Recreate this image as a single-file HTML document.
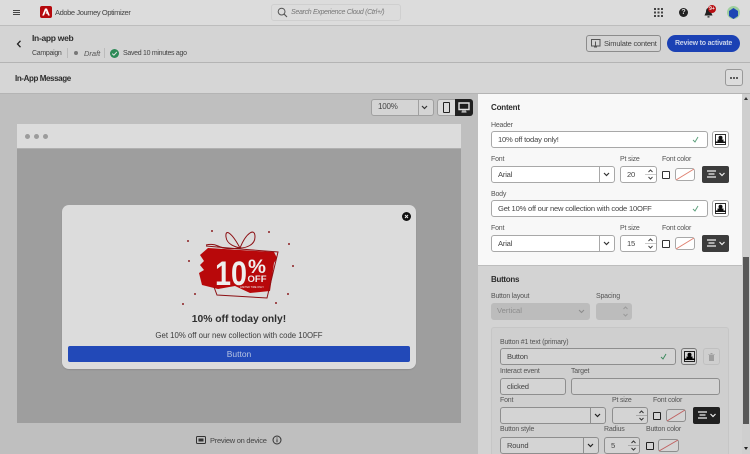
<!DOCTYPE html>
<html style="width:750px;height:454px;overflow:hidden"><head><meta charset="utf-8">
<style>
html,body{margin:0;padding:0}
body{width:750px;height:454px;overflow:hidden;position:relative;background:#bfbfbf;font-family:"Liberation Sans",sans-serif;color:#2c2c2c}
#w{position:absolute;left:0;top:0;width:750px;height:454px;overflow:hidden}
.a{position:absolute}
.t{position:absolute;white-space:nowrap;line-height:12px}
.lb{position:absolute;white-space:nowrap;font-size:7px;line-height:10px;color:#555;letter-spacing:-.2px}
.f{position:absolute;box-sizing:border-box;border:1px solid #a8a8a8;border-radius:3px;background:#fff;font-size:7.6px;letter-spacing:-.2px;line-height:15px;padding-left:6px;color:#444;white-space:nowrap}
.g .f{background:#d4d4d4;border-color:#8e8e8e}
.dv{position:absolute;top:0;bottom:0;width:1px;background:#a8a8a8}
.c{position:absolute;width:8px;height:8px;box-sizing:border-box;border:1px solid #333;background:#fff;border-radius:1px}
svg{position:absolute;display:block}
</style></head><body><div id="w">

<!-- top bar -->
<div class="a" style="left:0;top:0;width:750px;height:26px;box-sizing:border-box;background:#dcdcdc;border-bottom:1px solid #bdbdbd"></div>
<div class="a" style="left:13px;top:10px;width:7px;height:1px;background:#444;box-shadow:0 2px 0 #444,0 4px 0 #444"></div>
<div class="a" style="left:40px;top:6px;width:12px;height:12px;background:#b5080c;border-radius:2px"></div>
<svg style="left:42px;top:8px" width="8" height="8" viewBox="0 0 8 8"><path d="M3 .5H5L7.800 7.500H6L5.300 5.600H3.600L4.500 4 4 2.600 2 7.500H.2Z" fill="#fff"/></svg>
<div class="t" style="left:55px;top:6.500px;font-size:7.500px;letter-spacing:-.4px;color:#444">Adobe Journey Optimizer</div>
<div class="a" style="left:271px;top:4px;width:130px;height:17px;box-sizing:border-box;border:1px solid #cfcfcf;border-radius:3px"></div>
<svg style="left:277px;top:7px" width="11" height="11" viewBox="0 0 11 11"><circle cx="4.600" cy="4.600" r="3.400" fill="none" stroke="#555" stroke-width="1"/><path d="M7.200 7.200L10 10" stroke="#555" stroke-width="1.100"/></svg>
<div class="t" style="left:291px;top:7px;font-size:7px;letter-spacing:-.3px;font-style:italic;color:#777">Search Experience Cloud (Ctrl+/)</div>
<svg style="left:654px;top:8px" width="10" height="10" viewBox="0 0 10 10" fill="#444"><rect x="0" y="0" width="2" height="2"/><rect x="3.500" y="0" width="2" height="2"/><rect x="7" y="0" width="2" height="2"/><rect x="0" y="3.500" width="2" height="2"/><rect x="3.500" y="3.500" width="2" height="2"/><rect x="7" y="3.500" width="2" height="2"/><rect x="0" y="7" width="2" height="2"/><rect x="3.500" y="7" width="2" height="2"/><rect x="7" y="7" width="2" height="2"/></svg>
<div class="a" style="left:679px;top:8px;width:9px;height:9px;border-radius:50%;background:#222;color:#ddd;font-size:7px;font-weight:bold;line-height:9px;text-align:center">?</div>
<svg style="left:704px;top:8px" width="9" height="10" viewBox="0 0 9 10"><path d="M4.500 0C2.500 0 2 2 2 4L.5 7.500H8.500L7 4C7 2 6.500 0 4.500 0ZM3.500 8.200H5.500V9.500H3.500Z" fill="#222"/></svg>
<div class="a" style="left:708px;top:5px;width:8px;height:8px;border-radius:4px;background:#b80e12;color:#eee;font-size:5px;font-weight:bold;line-height:8px;text-align:center">9+</div>
<div class="a" style="left:727px;top:6px;width:13px;height:13px;border-radius:50%;background:#9fcf9f"></div>
<svg style="left:729px;top:8px" width="9" height="11" viewBox="0 0 9 11"><path d="M4.500 0L9 3V8L4.500 11 0 8V3Z" fill="#1e48b4"/></svg>

<!-- campaign header -->
<div class="a" style="left:0;top:26px;width:750px;height:37px;box-sizing:border-box;background:#d4d4d4;border-bottom:1px solid #b4b4b4"></div>
<svg style="left:16px;top:40px" width="6" height="8" viewBox="0 0 6 8"><path d="M4.500 .8L1.500 4 4.500 7.200" fill="none" stroke="#222" stroke-width="1.300"/></svg>
<div class="t" style="left:32px;top:32px;font-size:8.500px;letter-spacing:-.3px;font-weight:bold;color:#2c2c2c">In-app web</div>
<div class="t" style="left:32px;top:47.500px;font-size:7px;letter-spacing:-.3px;color:#444">Campaign</div>
<div class="a" style="left:67px;top:48px;width:1px;height:10px;background:#bbb"></div>
<div class="a" style="left:74px;top:51px;width:4px;height:4px;border-radius:50%;background:#777"></div>
<div class="t" style="left:84px;top:47.500px;font-size:7.500px;font-style:italic;color:#555">Draft</div>
<div class="a" style="left:104px;top:48px;width:1px;height:10px;background:#bbb"></div>
<div class="a" style="left:110px;top:49px;width:9px;height:9px;border-radius:50%;background:#2d8a57"></div>
<svg style="left:110px;top:49px" width="9" height="9" viewBox="0 0 9 9"><path d="M2.200 4.600L3.900 6.200 6.800 2.900" fill="none" stroke="#e6e6e6" stroke-width="1"/></svg>
<div class="t" style="left:123px;top:47.500px;font-size:7px;letter-spacing:-.3px;color:#444">Saved 10 minutes ago</div>
<div class="a" style="left:586px;top:35px;width:75px;height:17px;box-sizing:border-box;border:1px solid #8c8c8c;border-radius:3px"></div>
<svg style="left:591px;top:39px" width="10" height="9" viewBox="0 0 10 9"><rect x=".5" y=".5" width="8.500" height="6.500" fill="none" stroke="#555"/><path d="M4.500 2.500V7M3 8H6" stroke="#555"/></svg>
<div class="t" style="left:604px;top:38px;font-size:7.500px;letter-spacing:-.2px;color:#444">Simulate content</div>
<div class="a" style="left:667px;top:35px;width:73px;height:17px;border-radius:9px;background:#1b41b4;color:#c8d2ea;font-size:7px;letter-spacing:-.2px;font-weight:bold;line-height:17px;text-align:center">Review to activate</div>

<!-- sub header -->
<div class="a" style="left:0;top:63px;width:750px;height:31px;box-sizing:border-box;background:#d6d6d6;border-bottom:1px solid #b4b4b4"></div>
<div class="t" style="left:15px;top:72.500px;font-size:8px;letter-spacing:-.4px;font-weight:bold;color:#2c2c2c">In-App Message</div>
<div class="a" style="left:725px;top:69px;width:18px;height:17px;box-sizing:border-box;border:1px solid #999;border-radius:3px;background:#dcdcdc"></div>
<div class="a" style="left:730px;top:77px;width:2px;height:2px;border-radius:50%;background:#333;box-shadow:3px 0 0 #333,6px 0 0 #333"></div>

<!-- preview toolbar -->
<div class="f" style="left:371px;top:99px;width:63px;height:17px;background:#d4d4d4;border-color:#a0a0a0;font-size:8px;line-height:14px">100%<span class="dv" style="left:46px;background:#a0a0a0"></span></div>
<svg style="left:421px;top:105px" width="7" height="5" viewBox="0 0 7 5"><path d="M1 1L3.500 3.500 6 1" fill="none" stroke="#333" stroke-width="1.200"/></svg>
<div class="a" style="left:437px;top:99px;width:19px;height:17px;box-sizing:border-box;border:1px solid #a0a0a0;border-radius:3px 0 0 3px;background:#dadada"></div>
<div class="a" style="left:443px;top:102px;width:7px;height:11px;box-sizing:border-box;border:1px solid #222;border-radius:1px"></div>
<div class="a" style="left:455px;top:99px;width:18px;height:17px;background:#202020;border-radius:0 3px 3px 0"></div>
<svg style="left:458px;top:102px" width="12" height="11" viewBox="0 0 12 11"><path d="M1 1H11V7.500H1Z" fill="none" stroke="#e4e4e4" stroke-width="1.400"/><path d="M5 8V9.500M3.500 10H8.500M7 8V9.500" stroke="#e4e4e4"/></svg>

<!-- preview frame -->
<div class="a" style="left:17px;top:124px;width:444px;height:25px;background:#dcdcdc;border-bottom:1px solid #b0b0b0;box-sizing:border-box"></div>
<div class="a" style="left:25px;top:134px;width:5px;height:5px;border-radius:50%;background:#9c9c9c;box-shadow:9px 0 0 #9c9c9c,18px 0 0 #9c9c9c"></div>
<div class="a" style="left:17px;top:149px;width:444px;height:274px;background:#9e9e9e"></div>

<!-- modal -->
<div class="a" style="left:62px;top:205px;width:354px;height:164px;background:#dcdcdc;border-radius:7px;box-shadow:0 1px 1px #8e8e8e"></div>
<div class="a" style="left:402px;top:212px;width:9px;height:9px;border-radius:50%;background:#111"></div>
<svg style="left:402px;top:212px" width="9" height="9" viewBox="0 0 9 9"><path d="M3 3L6 6M6 3L3 6" stroke="#eee" stroke-width="1"/></svg>

<svg style="left:180px;top:225px" width="120" height="85" viewBox="0 0 120 85">
<path d="M28 23L60 25 94 27 97 33 94 38 90 66 70 68 55 61 38 64 22 60 19 48 24 45 20 40 24 36 20 30Z" fill="#b8080a"/>
<path d="M26 21L60 24 98 27 87 73 37 70 34 62" fill="none" stroke="#8c1014" stroke-width="1"/>
<path d="M60 23C52 8 45 3 46 12 47 20 56 22 60 23 66 8 75 2 75 12 75 20 66 23 60 23M60 23C50 24 44 24 38 21 34 19 30 19 26 20" fill="none" stroke="#8c1014" stroke-width="1"/>
<text x="35" y="60" font-family="Liberation Sans,sans-serif" font-size="34" font-weight="bold" fill="#eee" textLength="32" lengthAdjust="spacingAndGlyphs">10</text>
<text x="77" y="48" font-family="Liberation Sans,sans-serif" font-size="19" font-weight="bold" fill="#eee" text-anchor="middle" textLength="18" lengthAdjust="spacingAndGlyphs">%</text>
<text x="77" y="57" font-family="Liberation Sans,sans-serif" font-size="9.500" font-weight="bold" fill="#eee" text-anchor="middle">OFF</text>
<text x="72" y="63" font-family="Liberation Sans,sans-serif" font-size="2.500" fill="#eee" text-anchor="middle">LIMITED TIME ONLY</text>
<g fill="#8c2024"><circle cx="32" cy="6" r="1"/><circle cx="8" cy="16" r="1"/><circle cx="89" cy="7" r="1"/><circle cx="109" cy="19" r="1"/><circle cx="9" cy="36" r="1"/><circle cx="113" cy="41" r="1"/><circle cx="15" cy="69" r="1"/><circle cx="108" cy="69" r="1"/><circle cx="3" cy="79" r="1"/><circle cx="96" cy="78" r="1"/></g>
</svg>

<div class="a" style="left:62px;top:313px;width:354px;text-align:center;font-size:10.300px;font-weight:bold;line-height:14px;color:#2e2e2e">10% off today only!</div>
<div class="a" style="left:62px;top:330px;width:354px;text-align:center;font-size:7.800px;line-height:12px;color:#3c3c3c">Get 10% off our new collection with code 10OFF</div>
<div class="a" style="left:68px;top:346px;width:342px;height:16px;background:#2249b8;border-radius:2px;text-align:center;font-size:8.500px;line-height:16px;color:#b6c3e2">Button</div>

<!-- preview on device -->
<svg style="left:196px;top:436px" width="10" height="8" viewBox="0 0 10 8"><rect x=".5" y=".5" width="9" height="7" rx="1" fill="none" stroke="#333"/><rect x="2.500" y="2.500" width="5" height="3" fill="#333"/></svg>
<div class="t" style="left:210px;top:434.500px;font-size:7.500px;letter-spacing:-.25px;color:#444">Preview on device</div>
<svg style="left:272px;top:435px" width="10" height="10" viewBox="0 0 10 10"><circle cx="5" cy="5" r="4" fill="none" stroke="#333"/><path d="M5 4.300V7.300M5 2.500V3.500" stroke="#333"/></svg>

<!-- content panel -->
<div class="a" style="left:478px;top:94px;width:264px;height:171px;background:#f8f8f8"></div>
<div class="a" style="left:478px;top:265px;width:264px;height:189px;background:#d3d3d3;border-top:1px solid #bdbdbd;box-sizing:border-box"></div>
<div class="a" style="left:742px;top:94px;width:8px;height:360px;background:#cfcfcf"></div>
<div class="a" style="left:743px;top:257px;width:6px;height:167px;background:#585858"></div>
<svg style="left:744px;top:97px" width="4" height="3" viewBox="0 0 4 3"><path d="M2 0L4 3H0Z" fill="#333"/></svg>
<svg style="left:744px;top:447px" width="4" height="3" viewBox="0 0 4 3"><path d="M0 0H4L2 3Z" fill="#222"/></svg>

<div class="t" style="left:491px;top:101.500px;font-size:8px;letter-spacing:-.2px;font-weight:bold">Content</div>

<!-- Header -->
<div class="lb" style="left:491px;top:120.500px">Header</div>
<div class="f" style="left:491px;top:131px;width:217px;height:17px">10% off today only!</div>
<svg style="left:692px;top:136px" width="7" height="7" viewBox="0 0 7 7"><path d="M1 4L3 6 6 1" fill="none" stroke="#5da07c" stroke-width="1"/></svg>
<div class="f" style="left:712px;top:131px;width:17px;height:17px"></div>
<svg style="left:715px;top:134px" width="11" height="11" viewBox="0 0 11 11"><rect x=".5" y=".5" width="10" height="10" fill="none" stroke="#333"/><circle cx="5.500" cy="3.800" r="2" fill="#111"/><rect x="2.500" y="5.500" width="6" height="2" fill="#111"/><rect y="7.500" width="11" height="1.500" fill="#111"/></svg>

<div class="lb" style="left:491px;top:155px">Font</div>
<div class="lb" style="left:620px;top:155px">Pt size</div>
<div class="lb" style="left:662px;top:155px">Font color</div>
<div class="f" style="left:491px;top:166px;width:124px;height:17px">Arial<span class="dv" style="left:107px"></span></div>
<svg style="left:603px;top:172px" width="7" height="5" viewBox="0 0 7 5"><path d="M1 1L3.500 3.500 6 1" fill="none" stroke="#333" stroke-width="1.200"/></svg>
<div class="f" style="left:620px;top:166px;width:37px;height:17px">20</div>
<svg style="left:645px;top:168px" width="11" height="13" viewBox="0 0 11 13"><path d="M3.500 4L5.500 2 7.500 4M3.500 9L5.500 11 7.500 9" fill="none" stroke="#444"/><path d="M0 6.500H11" stroke="#ccc"/></svg>
<div class="c" style="left:662px;top:171px"></div>
<div class="f" style="left:675px;top:168px;width:20px;height:13px"></div>
<svg style="left:675px;top:168px" width="20" height="13" viewBox="0 0 20 13"><path d="M1 12L19 1" stroke="#e08070"/></svg>
<div class="a" style="left:702px;top:166px;width:27px;height:17px;background:#3c3c3c;border-radius:2px"></div>
<svg style="left:706px;top:170px" width="20" height="9" viewBox="0 0 20 9"><path d="M1 1H10M2.500 4H8.500M1 7H10" stroke="#eee" stroke-width="1.200"/><path d="M13.500 3L16 5.500 18.500 3" fill="none" stroke="#eee" stroke-width="1.200"/></svg>

<!-- Body -->
<div class="lb" style="left:491px;top:190px">Body</div>
<div class="f" style="left:491px;top:200px;width:217px;height:17px">Get 10% off our new collection with code 10OFF</div>
<svg style="left:692px;top:205px" width="7" height="7" viewBox="0 0 7 7"><path d="M1 4L3 6 6 1" fill="none" stroke="#5da07c" stroke-width="1"/></svg>
<div class="f" style="left:712px;top:200px;width:17px;height:17px"></div>
<svg style="left:715px;top:203px" width="11" height="11" viewBox="0 0 11 11"><rect x=".5" y=".5" width="10" height="10" fill="none" stroke="#333"/><circle cx="5.500" cy="3.800" r="2" fill="#111"/><rect x="2.500" y="5.500" width="6" height="2" fill="#111"/><rect y="7.500" width="11" height="1.500" fill="#111"/></svg>

<div class="lb" style="left:491px;top:224px">Font</div>
<div class="lb" style="left:620px;top:224px">Pt size</div>
<div class="lb" style="left:662px;top:224px">Font color</div>
<div class="f" style="left:491px;top:235px;width:124px;height:17px">Arial<span class="dv" style="left:107px"></span></div>
<svg style="left:603px;top:241px" width="7" height="5" viewBox="0 0 7 5"><path d="M1 1L3.500 3.500 6 1" fill="none" stroke="#333" stroke-width="1.200"/></svg>
<div class="f" style="left:620px;top:235px;width:37px;height:17px">15</div>
<svg style="left:645px;top:237px" width="11" height="13" viewBox="0 0 11 13"><path d="M3.500 4L5.500 2 7.500 4M3.500 9L5.500 11 7.500 9" fill="none" stroke="#444"/><path d="M0 6.500H11" stroke="#ccc"/></svg>
<div class="c" style="left:662px;top:240px"></div>
<div class="f" style="left:675px;top:237px;width:20px;height:13px"></div>
<svg style="left:675px;top:237px" width="20" height="13" viewBox="0 0 20 13"><path d="M1 12L19 1" stroke="#e08070"/></svg>
<div class="a" style="left:702px;top:235px;width:27px;height:17px;background:#3c3c3c;border-radius:2px"></div>
<svg style="left:706px;top:239px" width="20" height="9" viewBox="0 0 20 9"><path d="M1 1H10M2.500 4H8.500M1 7H10" stroke="#eee" stroke-width="1.200"/><path d="M13.500 3L16 5.500 18.500 3" fill="none" stroke="#eee" stroke-width="1.200"/></svg>

<!-- Buttons -->
<div class="t" style="left:491px;top:273.500px;font-size:8px;letter-spacing:-.3px;font-weight:bold">Buttons</div>
<div class="lb" style="left:491px;top:292px">Button layout</div>
<div class="lb" style="left:596px;top:292px">Spacing</div>
<div class="a" style="left:491px;top:303px;width:99px;height:17px;background:#bcbcbc;border-radius:3px;font-size:7.600px;line-height:16px;padding-left:6px;box-sizing:border-box;color:#8c8c8c">Vertical</div>
<svg style="left:578px;top:309px" width="7" height="5" viewBox="0 0 7 5"><path d="M1 1L3.500 3.500 6 1" fill="none" stroke="#8c8c8c" stroke-width="1"/></svg>
<div class="a" style="left:596px;top:303px;width:36px;height:17px;background:#bcbcbc;border-radius:3px"></div>
<svg style="left:620px;top:305px" width="11" height="13" viewBox="0 0 11 13"><path d="M3.500 4L5.500 2 7.500 4M3.500 9L5.500 11 7.500 9" fill="none" stroke="#9a9a9a"/></svg>

<div class="a" style="left:491px;top:327px;width:238px;height:127px;background:#cfcfcf;border:1px solid #c6c6c6;border-bottom:0;box-sizing:border-box;border-radius:3px 3px 0 0"></div>
<div class="g">
<div class="lb" style="left:500px;top:337.500px">Button #1 text (primary)</div>
<div class="f" style="left:500px;top:348px;width:176px;height:17px">Button</div>
<svg style="left:660px;top:353px" width="7" height="7" viewBox="0 0 7 7"><path d="M1 4L3 6 6 1" fill="none" stroke="#3d8a5e" stroke-width="1"/></svg>
<div class="f" style="left:681px;top:348px;width:16px;height:17px;border-color:#777"></div>
<svg style="left:684px;top:351px" width="11" height="11" viewBox="0 0 11 11"><rect x=".5" y=".5" width="10" height="10" fill="none" stroke="#222"/><circle cx="5.500" cy="3.800" r="2" fill="#000"/><rect x="2.500" y="5.500" width="6" height="2" fill="#000"/><rect y="7.500" width="11" height="1.500" fill="#000"/></svg>
<div class="a" style="left:703px;top:348px;width:17px;height:17px;box-sizing:border-box;border:1px solid #c0c0c0;border-radius:3px"></div>
<svg style="left:708px;top:353px" width="7" height="8" viewBox="0 0 7 8"><path d="M0 1H7V1.500H0ZM1 2H6V8H1ZM2.500 0H4.500V1H2.500Z" fill="#a0a0a0"/></svg>

<div class="lb" style="left:500px;top:367px">Interact event</div>
<div class="lb" style="left:571px;top:367px">Target</div>
<div class="f" style="left:500px;top:378px;width:66px;height:17px">clicked</div>
<div class="f" style="left:571px;top:378px;width:149px;height:17px"></div>

<div class="lb" style="left:500px;top:396px">Font</div>
<div class="lb" style="left:612px;top:396px">Pt size</div>
<div class="lb" style="left:653px;top:396px">Font color</div>
<div class="f" style="left:500px;top:407px;width:106px;height:17px"><span class="dv" style="left:89px;background:#8e8e8e"></span></div>
<svg style="left:594px;top:413px" width="7" height="5" viewBox="0 0 7 5"><path d="M1 1L3.500 3.500 6 1" fill="none" stroke="#222" stroke-width="1.200"/></svg>
<div class="f" style="left:612px;top:407px;width:36px;height:17px"></div>
<svg style="left:636px;top:409px" width="11" height="13" viewBox="0 0 11 13"><path d="M3.500 4L5.500 2 7.500 4M3.500 9L5.500 11 7.500 9" fill="none" stroke="#333"/><path d="M0 6.500H11" stroke="#aaa"/></svg>
<div class="c" style="left:653px;top:412px;background:#d4d4d4;border-color:#222"></div>
<div class="f" style="left:666px;top:409px;width:20px;height:13px"></div>
<svg style="left:666px;top:409px" width="20" height="13" viewBox="0 0 20 13"><path d="M1 12L19 1" stroke="#c06060"/></svg>
<div class="a" style="left:693px;top:407px;width:27px;height:17px;background:#202020;border-radius:2px"></div>
<svg style="left:697px;top:411px" width="20" height="9" viewBox="0 0 20 9"><path d="M1 1H10M2.500 4H8.500M1 7H10" stroke="#eee" stroke-width="1.200"/><path d="M13.500 3L16 5.500 18.500 3" fill="none" stroke="#eee" stroke-width="1.200"/></svg>

<div class="lb" style="left:500px;top:425px">Button style</div>
<div class="lb" style="left:604px;top:425px">Radius</div>
<div class="lb" style="left:646px;top:425px">Button color</div>
<div class="f" style="left:500px;top:437px;width:99px;height:17px">Round<span class="dv" style="left:82px;background:#8e8e8e"></span></div>
<svg style="left:587px;top:443px" width="7" height="5" viewBox="0 0 7 5"><path d="M1 1L3.500 3.500 6 1" fill="none" stroke="#222" stroke-width="1.200"/></svg>
<div class="f" style="left:604px;top:437px;width:36px;height:17px">5</div>
<svg style="left:628px;top:439px" width="11" height="13" viewBox="0 0 11 13"><path d="M3.500 4L5.500 2 7.500 4M3.500 9L5.500 11 7.500 9" fill="none" stroke="#333"/><path d="M0 6.500H11" stroke="#aaa"/></svg>
<div class="c" style="left:646px;top:442px;background:#d4d4d4;border-color:#222"></div>
<div class="f" style="left:658px;top:439px;width:21px;height:13px"></div>
<svg style="left:658px;top:439px" width="21" height="13" viewBox="0 0 21 13"><path d="M1 12L20 1" stroke="#c06060"/></svg>
</div>
</div></body></html>
